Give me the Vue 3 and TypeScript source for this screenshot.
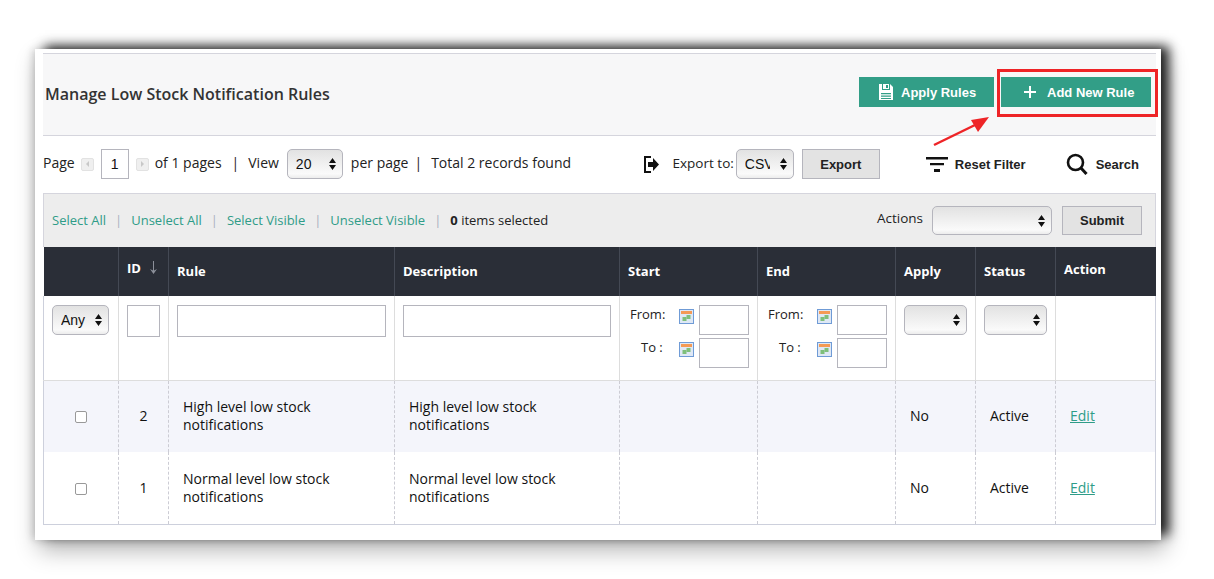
<template>
  <div class="page">
    <div class="panel">
      <div class="head">
        <h1>Manage Low Stock Notification Rules</h1>
        <div class="head-btns">
          <button class="btn-green apply">
            <svg width="16" height="18" viewBox="0 0 16 18"><path fill="#fff" d="M1 1h11l3 3v13H1z"/><path fill="#329e87" d="M4 1h1v5h6V1h1v6H4zM8 2h2v3H8zM3 10h10v1.200H3zM3 12.500h10v1.200H3zM3 15h10v1H3z"/></svg>
            Apply Rules
          </button>
          <button class="btn-green add">
            <svg width="12" height="12" viewBox="0 0 12 12"><path fill="#fff" d="M5 0h2v5h5v2H7v5H5V7H0V5h5z"/></svg>
            Add New Rule
          </button>
        </div>
      </div>

      <div class="toolbar">
        <div class="pager">
          <span>Page</span>
          <span class="pg-arrow prev"><i></i></span>
          <input class="pg-input" value="1" />
          <span class="pg-arrow next"><i></i></span>
          <span>of 1 pages</span>
          <span class="bar">|</span>
          <span>View</span>
          <select class="sel view"><option>20</option></select>
          <span>per page</span>
          <span class="bar bar-last">|</span>
          <span>Total 2 records found</span>
        </div>
        <div class="tools">
          <svg class="exp-icon" width="15" height="17" viewBox="0 0 15 17"><path fill="none" stroke="#111" stroke-width="2" d="M7 1H1v15h6"/><path fill="#111" d="M4 6h5V2l6 6.500-6 6.500v-4H4z"/></svg>
          <span class="exp-label">Export to:</span>
          <select class="sel csv"><option>CSV</option></select>
          <button class="btn-grey export">Export</button>
          <svg class="filter-icon" width="22" height="15" viewBox="0 0 22 15"><path fill="#111" d="M0 0h22v2.500H0zM4 6h14v2.200H4zM8 12h6v3H8z"/></svg>
          <span class="tool-text reset">Reset Filter</span>
          <svg class="search-icon" width="22" height="22" viewBox="0 0 22 22"><circle cx="9.500" cy="9.500" r="7.500" fill="none" stroke="#111" stroke-width="2.600"/><path stroke="#111" stroke-width="3" d="M14.500 14.500l6 6.500"/></svg>
          <span class="tool-text">Search</span>
        </div>
      </div>

      <div class="mass">
        <div class="mass-links">
          <template v-for="l in massLinks" :key="l">
            <a>{{ l }}</a><span class="sep">|</span>
          </template>
          <span><b>0</b> items selected</span>
        </div>
        <div class="mass-actions">
          <span>Actions</span>
          <select class="sel actions"></select>
          <button class="btn-grey submit">Submit</button>
        </div>
      </div>

      <table>
        <colgroup>
          <col v-for="(w, i) in colWidths" :key="i" :style="{ width: w + 'px' }" />
        </colgroup>
        <thead>
          <tr>
            <th></th>
            <th class="th-id">
              ID
              <svg class="sort" width="7" height="13" viewBox="0 0 7 13"><path fill="#8c909a" d="M3 0h1v9.500L7 8 3.500 13 0 8l3 1.500z"/></svg>
            </th>
            <th>Rule</th>
            <th>Description</th>
            <th>Start</th>
            <th>End</th>
            <th>Apply</th>
            <th>Status</th>
            <th class="th-action">Action</th>
          </tr>
        </thead>
        <tbody>
          <tr class="filters">
            <td><select class="sel any"><option>Any</option></select></td>
            <td><input class="f-input" /></td>
            <td><input class="f-input" /></td>
            <td><input class="f-input" /></td>
            <td v-for="c in ['start', 'end']" :key="c">
              <div class="range" v-for="r in ['From:', 'To :']" :key="r">
                <label :class="{ to: r === 'To :' }">{{ r }}</label>
                <svg class="cal" width="15" height="15" viewBox="0 0 15 15">
                  <rect x=".5" y=".5" width="14" height="14" fill="#dfe8f5" stroke="#6f9bd6"/>
                  <rect x="2" y="2" width="11" height="3" fill="#f49a55"/>
                  <rect x="7.500" y="6" width="4" height="4" fill="#7fbf7b"/>
                  <rect x="3.500" y="8" width="4" height="4" fill="#7fbf7b"/>
                </svg>
                <input class="d-input" />
              </div>
            </td>
            <td><select class="sel blank"></select></td>
            <td><select class="sel blank"></select></td>
            <td></td>
          </tr>
          <tr v-for="(row, i) in rows" :key="row.id" class="data" :class="{ odd: i === 0 }">
            <td class="center"><span class="check"></span></td>
            <td class="center num">{{ row.id }}</td>
            <td class="text">{{ row.name }}</td>
            <td class="text">{{ row.name }}</td>
            <td></td>
            <td></td>
            <td class="plain">No</td>
            <td class="plain">Active</td>
            <td class="plain"><a class="edit">Edit</a></td>
          </tr>
        </tbody>
      </table>

      <div class="callout"></div>
      <svg class="pointer" width="60" height="32" viewBox="0 0 60 32">
        <path stroke="#ee2427" stroke-width="2.500" d="M1 30L42 10"/>
        <path fill="#ee2427" d="M56 2L45 17l-7-12z"/>
      </svg>
    </div>
  </div>
</template>

<script setup lang="ts">
const massLinks = ['Select All', 'Unselect All', 'Select Visible', 'Unselect Visible']
const colWidths = [75, 50, 226, 225, 138, 138, 80, 80, 100]
const rows = [
  { id: 2, name: 'High level low stock notifications' },
  { id: 1, name: 'Normal level low stock notifications' },
]
</script>

<style scoped>
.page {
  box-sizing: border-box;
  height: 579px;
  padding: 49px 0 0 35px;
  overflow: hidden;
  background: #fff;
}
.panel {
  position: relative;
  box-sizing: border-box;
  width: 1126px;
  height: 491px;
  padding: 4px 5px 0 8px;
  background: #fff;
  font-family: "Open Sans", sans-serif;
  font-size: 14px;
  color: #222;
  box-shadow: 9px -4px 11px -1px rgba(0, 0, 0, .85), 4px 10px 22px rgba(0, 0, 0, .3), -3px 0 8px rgba(0, 0, 0, .14);
}
.head {
  display: flex;
  align-items: center;
  justify-content: space-between;
  height: 83px;
  box-sizing: border-box;
  padding: 0 5px 2px 2px;
  background: #f7f7f8;
  border-top: 1px solid #d5d5dd;
  border-bottom: 1px solid #d5d5dd;
}
h1 {
  margin: 0;
  font-size: 16px;
  font-weight: 600;
  color: #333;
}
.head-btns {
  display: flex;
  gap: 7px;
  margin-top: -3px;
}
button {
  font-family: "Liberation Sans", sans-serif;
  font-weight: 700;
  padding: 0;
}
.btn-green {
  display: flex;
  align-items: center;
  height: 30px;
  border: 0;
  background: #329e87;
  color: #fff;
  font-size: 13px;
}
.apply { width: 135px; gap: 7px; padding-left: 19px; }
.add { width: 150px; gap: 11px; padding-left: 23px; }
.toolbar {
  display: flex;
  justify-content: space-between;
  align-items: center;
  height: 57px;
  padding-right: 17px;
}
.pager, .tools {
  display: flex;
  align-items: center;
}
.pager { margin-top: -1px; }
.pager > span:not(.pg-arrow) { margin-top: -4px; }
.tools { margin-top: -1px; }
.pg-arrow {
  display: flex;
  align-items: center;
  justify-content: center;
  box-sizing: border-box;
  width: 13px;
  height: 13px;
  background: #efefef;
  border: 1px solid #e2e2e2;
  border-radius: 2px;
}
.pg-arrow i {
  border: 3px solid transparent;
}
.prev { margin: 0 7px 0 6px; }
.prev i { border-right-color: #c8c8c8; border-left-width: 0; }
.next { margin: 0 6px 0 7px; }
.next i { border-left-color: #c8c8c8; border-right-width: 0; }
.pg-input {
  box-sizing: border-box;
  width: 28px;
  height: 30px;
  padding: 0;
  border: 1px solid #b5b5bd;
  text-align: center;
  font-family: "Liberation Sans", sans-serif;
  font-size: 14px;
  color: #111;
  background: #fff;
}
.bar { margin: 0 9px 0 10px; }
.bar-last { margin: 0 9px 0 6px; }
.sel {
  box-sizing: border-box;
  height: 30px;
  padding: 0 20px 0 8px;
  appearance: none;
  border: 1px solid #b5b5bd;
  border-radius: 5px;
  font-family: "Liberation Sans", sans-serif;
  font-size: 14px;
  color: #111;
  background-color: #eee;
  background-image:
    url("data:image/svg+xml,%3Csvg xmlns='http://www.w3.org/2000/svg' width='7' height='12'%3E%3Cpath fill='%23111' d='M3.500 0L7 5H0zM3.500 12L0 7h7z'/%3E%3C/svg%3E"),
    linear-gradient(#e2e2e2, #fafafa 85%, #ececec);
  background-repeat: no-repeat, no-repeat;
  background-position: right 6px center, 0 0;
}
.view { width: 56px; margin: 0 8px; }
.exp-icon { margin-right: 14px; }
.exp-label { font-size: 13.500px; margin: -3px 2px 0 0; }
.csv { width: 58px; margin-right: 8px; padding-right: 23px; }
.btn-grey {
  box-sizing: border-box;
  height: 30px;
  border: 1px solid #b5b5bd;
  background: #e3e3e3;
  color: #222;
  font-size: 13px;
}
.export { width: 78px; margin-right: 46px; }
.filter-icon { margin-right: 7px; }
.tool-text {
  font-family: "Liberation Sans", sans-serif;
  font-weight: 700;
  font-size: 13px;
  color: #222;
}
.reset { margin-right: 40px; }
.search-icon { margin-right: 8px; }
.mass {
  display: flex;
  justify-content: space-between;
  align-items: center;
  box-sizing: border-box;
  height: 54px;
  padding: 0 13px 0 8px;
  background: #ededed;
  border: 1px solid #d5d5dd;
  border-bottom: 0;
  font-size: 13px;
}
.mass-links, .mass-actions {
  display: flex;
  align-items: center;
}
.mass-links { margin-top: -2px; }
.mass-links a { color: #2f9c88; }
.sep { margin: 0 9px; color: #a9b0c0; }
.mass-links b { font-weight: 700; }
.mass-actions span { margin-right: 9px; margin-top: -5px; font-size: 13.500px; }
.actions { width: 120px; height: 29px; margin-right: 10px; }
.submit { width: 80px; height: 29px; }
table {
  width: 1112px;
  table-layout: fixed;
  border-collapse: collapse;
  font-size: 14px;
}
th {
  height: 49px;
  box-sizing: border-box;
  padding: 0 8px 2px;
  background: #2a2e37;
  border-right: 1px solid #444954;
  color: #fff;
  font-size: 13px;
  font-weight: 700;
  text-align: left;
}
th:last-child { border-right: 0; }
.th-id { padding-bottom: 8px; }
.th-action { padding-bottom: 6px; }
.sort { margin-left: 6px; vertical-align: -1px; }
.filters td {
  height: 84px;
  box-sizing: border-box;
  padding: 9px 8px 0;
  vertical-align: top;
  border-right: 1px solid #ddd;
  border-bottom: 1px solid #ddd;
}
.filters td:first-child { border-left: 1px solid #cdd0dc; }
.filters td:last-child { border-right: 1px solid #cdd0dc; }
.any { width: 57px; }
.blank { width: 63px; }
.f-input {
  display: block;
  box-sizing: border-box;
  width: 100%;
  height: 32px;
  padding: 0;
  border: 1px solid #b5b5bd;
  background: #fff;
}
.filters td:nth-child(5), .filters td:nth-child(6) { padding: 9px 7px 0 10px; }
.range {
  display: flex;
  align-items: flex-start;
  height: 33px;
  font-size: 13px;
}
.range label { width: 49px; }
.range label.to { box-sizing: border-box; padding-left: 11px; }
.cal { margin: 4px 5px 0 0; flex: none; }
.d-input {
  box-sizing: border-box;
  width: 50px;
  height: 30px;
  padding: 0;
  border: 1px solid #b5b5bd;
  background: #fff;
}
.data td {
  height: 72px;
  box-sizing: border-box;
  border-right: 1px dashed #ccccd4;
  border-bottom: 1px solid #cdd0dc;
  color: #111;
}
.data td:first-child { border-left: 1px solid #cdd0dc; }
.data td:last-child { border-right: 1px solid #cdd0dc; }
.odd td { background: #f4f5fb; border-bottom: 0; }
.odd .plain, .odd .num { padding-bottom: 2px; }
.center { text-align: center; }
.text { padding: 0 40px 0 14px; line-height: 18px; }
.plain { padding: 0 14px; }
.check {
  display: block;
  box-sizing: border-box;
  width: 12px;
  height: 12px;
  margin: 2px auto 0;
  background: #fff;
  border: 1px solid #999;
  border-radius: 2px;
}
.edit { color: #2f9c88; text-decoration: underline; }
.callout {
  position: absolute;
  left: 962px;
  top: 20px;
  width: 161px;
  height: 48px;
  box-sizing: border-box;
  border: 3px solid #ee2427;
}
.pointer {
  position: absolute;
  left: 898px;
  top: 66px;
}
</style>
